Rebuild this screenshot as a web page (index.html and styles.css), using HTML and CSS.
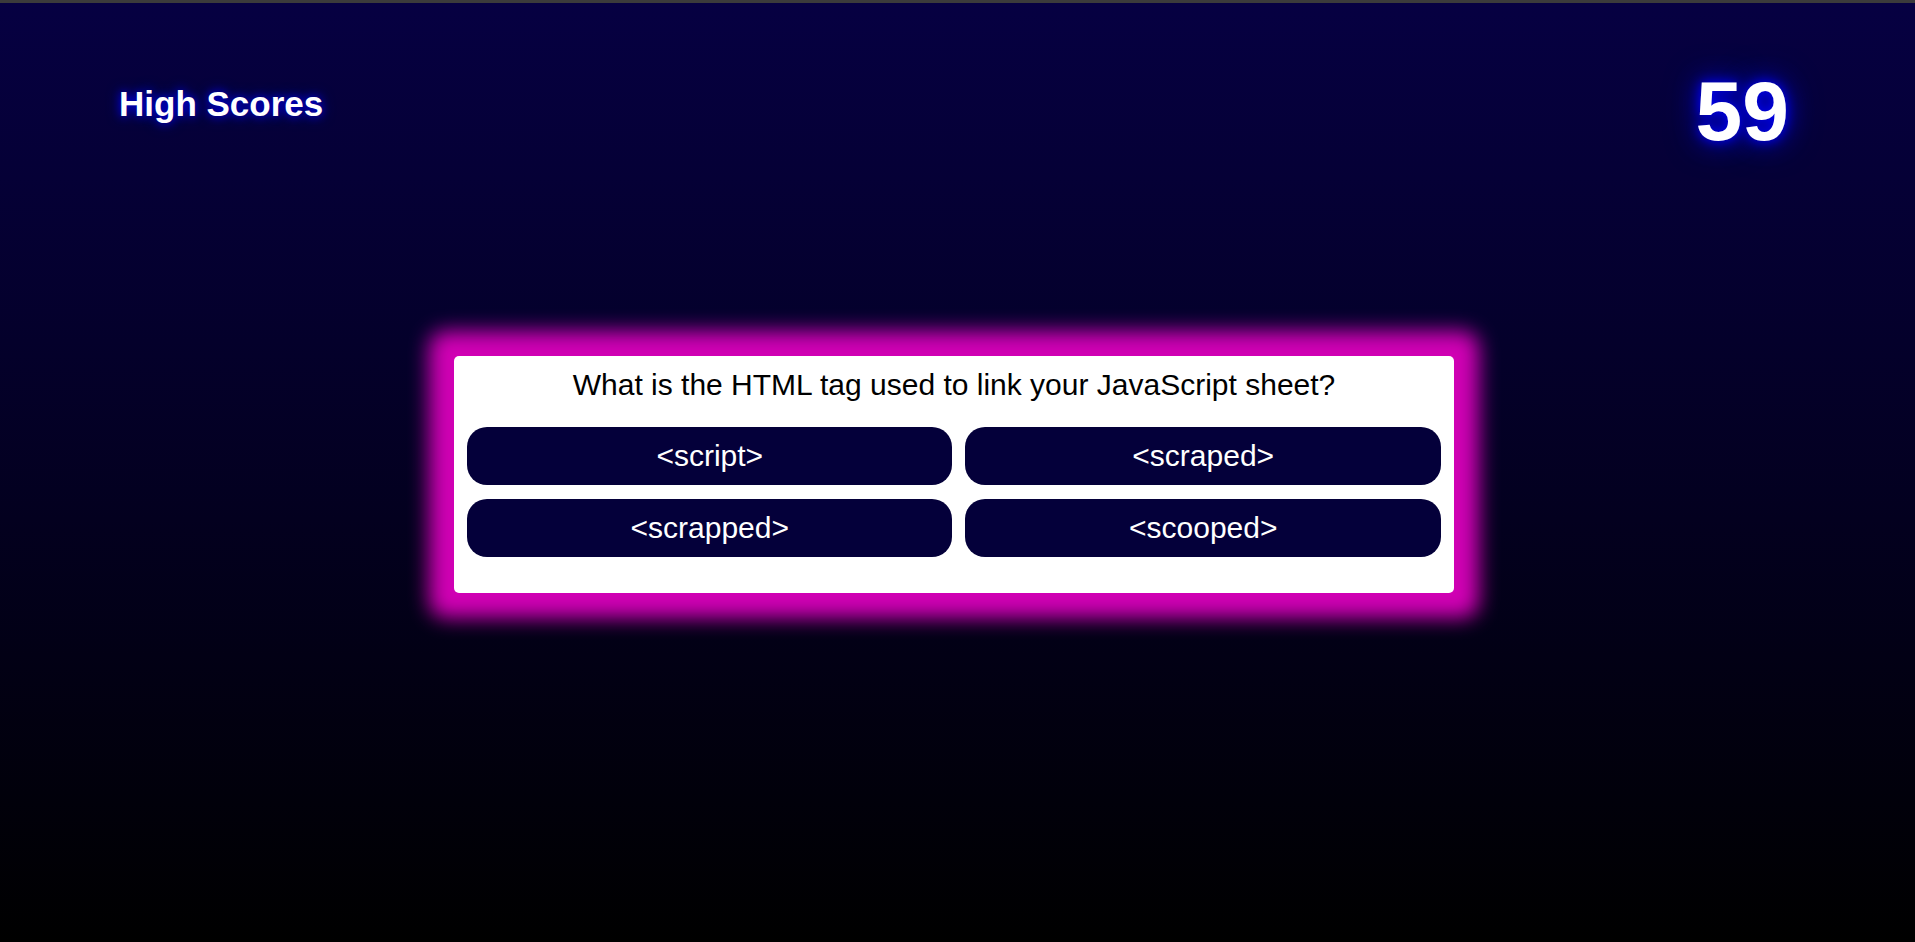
FILE: index.html
```html
<!DOCTYPE html>
<html lang="en">
<head>
<meta charset="utf-8">
<title>Code Quiz</title>
<link rel="stylesheet" href="styles.css">
</head>
<body>
  <div class="topbar"></div>
  <header class="header">
    <a class="high-scores" href="#">High Scores</a>
    <div class="timer">59</div>
  </header>
  <main class="quiz">
    <section class="card">
      <h2 class="question">What is the HTML tag used to link your JavaScript sheet?</h2>
      <div class="answers">
        <button class="answer">&lt;script&gt;</button>
        <button class="answer">&lt;scraped&gt;</button>
        <button class="answer">&lt;scrapped&gt;</button>
        <button class="answer">&lt;scooped&gt;</button>
      </div>
    </section>
  </main>
</body>
</html>
```
FILE: styles.css
```css
html, body {
  margin: 0;
  padding: 0;
}

body {
  min-height: 100vh;
  background: linear-gradient(to bottom, #060042 0%, #03001f 55%, #000000 100%);
  font-family: "Liberation Sans", Arial, sans-serif;
  color: #ffffff;
  overflow: hidden;
}

.topbar {
  height: 3px;
  background: #3b3b3b;
}

.header {
  display: flex;
  justify-content: space-between;
  align-items: flex-start;
  padding: 60px 126px 0 119px;
}

.high-scores {
  margin-top: 21px;
  font-size: 35px;
  font-weight: bold;
  color: #ffffff;
  text-decoration: none;
  text-shadow: 0 0 8px #0000e0, 0 0 14px #0000a0;
}

.timer {
  font-size: 84px;
  font-weight: bold;
  line-height: normal;
  text-shadow: 0 0 12px #0000ff, 0 0 24px #0000c0, 0 0 34px #000090;
}

.quiz {
  display: flex;
  justify-content: center;
  padding-right: 7px;
}

.card {
  width: 1000px;
  box-sizing: border-box;
  margin-top: 196px;
  padding: 11px 13px 36px;
  background: #ffffff;
  border-radius: 5px;
  box-shadow: 0 0 20px 25px #d000b4;
}

.question {
  margin: 0 0 25px;
  font-size: 30px;
  font-weight: normal;
  line-height: 35px;
  color: #000000;
  text-align: center;
}

.answers {
  display: grid;
  grid-template-columns: auto auto;
  gap: 14px 13px;
}

.answer {
  height: 58px;
  padding: 0 12px;
  border: none;
  border-radius: 20px;
  background: #04003a;
  color: #ffffff;
  font-family: "Liberation Sans", Arial, sans-serif;
  font-size: 30px;
  line-height: 34px;
  cursor: pointer;
}
```
